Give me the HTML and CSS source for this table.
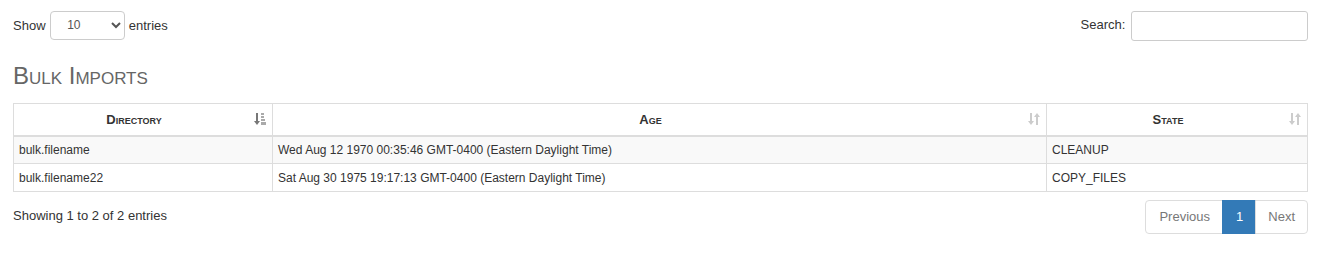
FILE: index.html
```html
<!DOCTYPE html>
<html lang="en">
<head>
    <meta charset="UTF-8">
    <title>Bulk Imports</title>
    <link rel="stylesheet" href="styles.css">
</head>
<body>
    <div class="page">
        <!-- Controles de la tabla -->
        <div class="toolbar">
            <label class="length">Show
                <select>
                    <option>10</option>
                    <option>25</option>
                    <option>50</option>
                </select>
                entries</label>
            <label class="search">Search: <input type="search"></label>
        </div>

        <h2 class="title">Bulk Imports</h2>

        <table class="grid">
            <thead>
                <tr>
                    <th class="col-dir">Directory
                        <svg class="sort active" width="12" height="14" viewBox="0 0 12 14">
                            <path d="M2 1h2v8h2l-3 4-3-4h2z" fill="#777"/>
                            <rect x="7" y="1" width="3" height="2" fill="#aaa"/>
                            <rect x="7" y="4" width="3" height="2" fill="#aaa"/>
                            <rect x="7" y="7" width="4" height="2" fill="#aaa"/>
                            <rect x="7" y="10" width="5" height="3" fill="#aaa"/>
                        </svg>
                    </th>
                    <th class="col-age">Age
                        <svg class="sort" width="12" height="14" viewBox="0 0 12 14">
                            <path d="M2 1h2v8h2l-3 4-3-4h2z" fill="#ccc"/>
                            <path d="M8 13h2V5h2L9 1 6 5h2z" fill="#ccc"/>
                        </svg>
                    </th>
                    <th class="col-state">State
                        <svg class="sort" width="12" height="14" viewBox="0 0 12 14">
                            <path d="M2 1h2v8h2l-3 4-3-4h2z" fill="#ccc"/>
                            <path d="M8 13h2V5h2L9 1 6 5h2z" fill="#ccc"/>
                        </svg>
                    </th>
                </tr>
            </thead>
            <tbody>
                <tr>
                    <td>bulk.filename</td>
                    <td>Wed Aug 12 1970 00:35:46 GMT-0400 (Eastern Daylight Time)</td>
                    <td>CLEANUP</td>
                </tr>
                <tr>
                    <td>bulk.filename22</td>
                    <td>Sat Aug 30 1975 19:17:13 GMT-0400 (Eastern Daylight Time)</td>
                    <td>COPY_FILES</td>
                </tr>
            </tbody>
        </table>

        <div class="footer">
            <div class="info">Showing 1 to 2 of 2 entries</div>
            <ul class="pager">
                <li class="prev">Previous</li>
                <li class="current">1</li>
                <li class="next">Next</li>
            </ul>
        </div>
    </div>
</body>
</html>
```

FILE: styles.css
```css
body {
    font-family: "Liberation Sans", Arial, sans-serif;
    font-size: 13px;
    color: #333;
    background-color: #fff;
    margin: 0;
    padding: 0;
}
.page {
    padding: 11px 34px 0 13px;
}
.toolbar {
    display: flex;
    justify-content: space-between;
    align-items: center;
    height: 30px;
}
.length {
    position: relative;
    top: -1px;
}
.length select {
    width: 75px;
    height: 29px;
    margin: 0 0 0 1px;
    padding: 0 8px 0 12px;
    font-family: inherit;
    font-size: 12px;
    color: #555;
    background-color: #fff;
    border: 1px solid #ccc;
    border-radius: 4px;
}
.search input {
    width: 177px;
    height: 30px;
    box-sizing: border-box;
    margin-left: 2px;
    border: 1px solid #ccc;
    border-radius: 3px;
    vertical-align: middle;
}
.title {
    font-variant: small-caps;
    font-weight: normal;
    font-size: 24px;
    color: #666;
    margin: 21px 0 13px 0;
    line-height: 28px;
}
.grid {
    width: 100%;
    border-collapse: collapse;
    table-layout: fixed;
    font-size: 12px;
}
.grid th,
.grid td {
    box-sizing: border-box;
    border: 1px solid #ddd;
}
.grid th {
    position: relative;
    height: 32px;
    padding: 0 26px 0 8px;
    font-variant: small-caps;
    font-weight: bold;
    font-size: 13px;
    color: #333;
    text-align: center;
    border-bottom: 2px solid #ddd;
}
.grid td {
    height: 28px;
    padding: 0 5px;
    white-space: nowrap;
}
.grid tbody tr:nth-child(odd) {
    background-color: #f9f9f9;
}
.col-dir {
    width: 259px;
}
.col-state {
    width: 261px;
}
.sort {
    position: absolute;
    right: 6px;
    top: 8px;
}
.footer {
    display: flex;
    justify-content: space-between;
    align-items: flex-start;
    margin-top: 8px;
}
.info {
    padding-top: 8px;
}
.pager {
    display: flex;
    list-style: none;
    margin: 0;
    padding: 0;
}
.pager li {
    height: 32px;
    line-height: 32px;
    padding: 0 12px;
    border: 1px solid #ddd;
    margin-left: -1px;
    color: #777;
    background-color: #fff;
}
.pager li.prev {
    padding-left: 13px;
    border-radius: 4px 0 0 4px;
}
.pager li.next {
    border-radius: 0 4px 4px 0;
}
.pager li.current {
    padding-left: 13px;
    color: #fff;
    background-color: #337ab7;
    border-color: #337ab7;
}
```
